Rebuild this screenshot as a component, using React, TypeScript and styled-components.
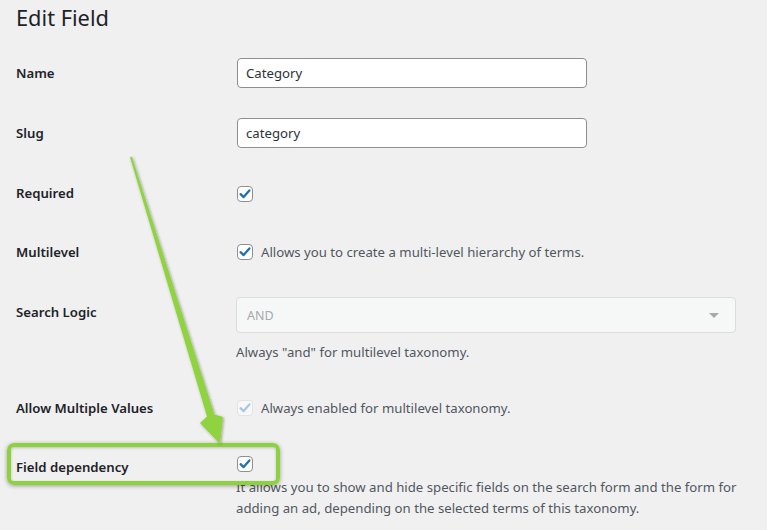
import styled, { createGlobalStyle } from "styled-components";

const GlobalStyle = createGlobalStyle`
  html, body {
    margin: 0;
    padding: 0;
    background: #f0f0f1;
  }
  body {
    font-family: "Noto Sans", "Open Sans", sans-serif;
    font-size: 13.2px;
    color: #1d2327;
  }
  * {
    box-sizing: border-box;
  }
`;

const Page = styled.div`
  position: relative;
  width: 767px;
  height: 530px;
  padding: 0 16px;
  overflow: hidden;
`;

const Title = styled.h1`
  margin: 0;
  padding-top: 3px;
  font-size: 21.8px;
  font-weight: 400;
  line-height: 30px;
  color: #1d2327;
`;

const Row = styled.div<{ $top: number }>`
  display: grid;
  grid-template-columns: 220px 1fr;
  align-items: start;
  margin-top: ${(p) => p.$top}px;
`;

const Label = styled.div<{ $offset?: number }>`
  margin-top: ${(p) => p.$offset ?? 0}px;
  font-weight: 600;
  line-height: 20px;
`;

const Field = styled.div`
  display: flex;
  flex-direction: column;
`;

const TextInput = styled.div`
  width: 350px;
  height: 30px;
  margin-left: 1px;
  padding: 0 8px;
  display: flex;
  align-items: center;
  background: #fff;
  border: 1px solid #8c8f94;
  border-radius: 4px;
  color: #2c3338;
  line-height: 20px;
`;

const CheckRow = styled.div`
  display: flex;
  align-items: center;
  gap: 8px;
  line-height: 20px;
  color: #50575e;
`;

const Box = styled.span<{ $disabled?: boolean; $shift?: number }>`
  display: inline-flex;
  align-items: center;
  justify-content: center;
  width: 16px;
  height: 16px;
  margin-left: 1px;
  margin-top: ${(p) => p.$shift ?? 0}px;
  background: ${(p) => (p.$disabled ? "rgba(255,255,255,0.5)" : "#fff")};
  border: 1px solid ${(p) => (p.$disabled ? "rgba(220,220,222,0.75)" : "#8c8f94")};
  border-radius: 4px;
  flex-shrink: 0;
`;

const Select = styled.div`
  width: 500px;
  height: 36px;
  padding: 0 10px;
  display: flex;
  align-items: center;
  justify-content: space-between;
  background: #f6f7f7;
  border: 1px solid #dcdcde;
  border-radius: 4px;
  color: #a7aaad;
  font-size: 12.5px;
`;

const Caret = styled.span`
  width: 0;
  height: 0;
  margin-right: 6px;
  border-left: 5px solid transparent;
  border-right: 5px solid transparent;
  border-top: 5px solid #a7aaad;
`;

const Help = styled.p<{ $top: number }>`
  max-width: 505px;
  margin: ${(p) => p.$top}px 0 0;
  line-height: 21px;
  color: #50575e;
`;

const Highlight = styled.div`
  position: absolute;
  left: 7px;
  top: 443px;
  width: 273px;
  height: 42px;
  border: 4px solid #8dd23e;
  border-radius: 7px;
  box-shadow: 0 1px 4px rgba(0, 0, 0, 0.35), inset 0 1px 3px rgba(0, 0, 0, 0.2);
  pointer-events: none;
`;

const ArrowLayer = styled.svg`
  position: absolute;
  left: 0;
  top: 0;
  pointer-events: none;
`;

function Check({ disabled }: { disabled?: boolean }) {
  return (
    <svg width="14" height="14" viewBox="0 0 14 14">
      <path
        d="M2.6 7.2 L5.6 10.1 L11.4 3.4"
        fill="none"
        stroke={disabled ? "#a9c8e3" : "#2271b1"}
        strokeWidth="2.3"
        strokeLinecap="round"
        strokeLinejoin="round"
      />
    </svg>
  );
}

export default function App() {
  return (
    <>
      <GlobalStyle />
      <Page>
        <Title>Edit Field</Title>

        <Row $top={25}>
          <Label $offset={5}>Name</Label>
          <Field>
            <TextInput>Category</TextInput>
          </Field>
        </Row>

        <Row $top={30}>
          <Label $offset={5}>Slug</Label>
          <Field>
            <TextInput>category</TextInput>
          </Field>
        </Row>

        <Row $top={35}>
          <Label>Required</Label>
          <Field>
            <CheckRow>
              <Box $shift={3}>
                <Check />
              </Box>
            </CheckRow>
          </Field>
        </Row>

        <Row $top={39}>
          <Label>Multilevel</Label>
          <Field>
            <CheckRow>
              <Box>
                <Check />
              </Box>
              Allows you to create a multi-level hierarchy of terms.
            </CheckRow>
          </Field>
        </Row>

        <Row $top={35}>
          <Label $offset={5}>Search Logic</Label>
          <Field>
            <Select>
              AND
              <Caret />
            </Select>
            <Help $top={9}>Always "and" for multilevel taxonomy.</Help>
          </Field>
        </Row>

        <Row $top={35}>
          <Label>Allow Multiple Values</Label>
          <Field>
            <CheckRow>
              <Box $disabled>
                <Check disabled />
              </Box>
              Always enabled for multilevel taxonomy.
            </CheckRow>
          </Field>
        </Row>

        <Row $top={38}>
          <Label $offset={1}>Field dependency</Label>
          <Field>
            <CheckRow>
              <Box>
                <Check />
              </Box>
            </CheckRow>
            <Help $top={5}>
              It allows you to show and hide specific fields on the search form and the form for
              adding an ad, depending on the selected terms of this taxonomy.
            </Help>
          </Field>
        </Row>

        <Highlight />
        <ArrowLayer width="767" height="530" viewBox="0 0 767 530">
          <defs>
            <filter id="arrowShadow" x="-20%" y="-5%" width="140%" height="110%">
              <feDropShadow dx="1" dy="1" stdDeviation="1.6" floodColor="#000" floodOpacity="0.35" />
            </filter>
          </defs>
          <polygon
            points="130,157.3 132,156.7 214.5,414.5 223,417 220,444 200,423 207,416.5"
            fill="#8fd43f"
            filter="url(#arrowShadow)"
          />
        </ArrowLayer>
      </Page>
    </>
  );
}
